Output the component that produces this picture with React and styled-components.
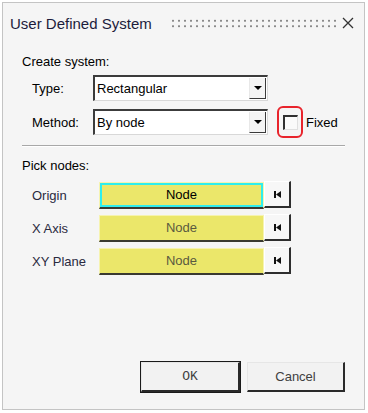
import styled, { createGlobalStyle } from "styled-components"

const GlobalStyle = createGlobalStyle`
  html, body { margin: 0; padding: 0; background: #ffffff; }
  body { padding: 2px; font-family: "Liberation Sans", Arial, sans-serif; }
`

const Window = styled.div`
  width: 361px;
  height: 406px;
  border: 1px solid #c4c4c4;
  background: #f5f5f5;
  display: flex;
  flex-direction: column;
  box-sizing: content-box;
`

const TitleBar = styled.div`
  height: 40px;
  display: flex;
  align-items: center;
  padding: 0 10px 0 7px;
`

const Title = styled.div`
  font-size: 15px;
  color: #1c1c3c;
`

const Dots = styled.div`
  flex: 1;
  height: 11px;
  margin: 0 6px 0 18px;
  background-image: radial-gradient(circle, #8a8a8a 0.9px, transparent 1.3px);
  background-size: 6px 5.5px;
`

const Body = styled.div`
  flex: 1;
  display: flex;
  flex-direction: column;
  padding: 11px 19px 17px 19px;
  font-size: 13px;
  color: #000;
`

const SectionLabel = styled.div`
  height: 16px;
  line-height: 16px;
`

const Rows = styled.div`
  display: flex;
  flex-direction: column;
  gap: ${p => p.gap}px;
  margin-top: ${p => p.top}px;
  padding-left: 10px;
`

const Row = styled.div`
  display: flex;
  align-items: center;
  height: 26px;
`

const Label = styled.div`
  width: ${p => p.w}px;
  color: ${p => p.color || "#000"};
`

const Combo = styled.div`
  width: 175px;
  height: 26px;
  box-sizing: border-box;
  border-top: 2px solid #3c3c3c;
  border-left: 2px solid #3c3c3c;
  border-right: 1px solid #d8d8d8;
  border-bottom: 1px solid #d8d8d8;
  background: #ffffff;
  display: flex;
  align-items: stretch;
`

const ComboText = styled.div`
  flex: 1;
  display: flex;
  align-items: center;
  padding-left: 2px;
`

const ComboArrow = styled.div`
  width: 15px;
  margin: 1px 1px 1px 0;
  background: #f4f4f4;
  border-left: 1px solid #e8e8e8;
  border-right: 1px solid #3a3a3a;
  border-bottom: 1px solid #3a3a3a;
  display: flex;
  align-items: center;
  justify-content: center;
  &::after {
    content: "";
    border-left: 4px solid transparent;
    border-right: 4px solid transparent;
    border-top: 4px solid #000;
  }
`

const Highlight = styled.div`
  margin-left: 9px;
  width: 26px;
  height: 32px;
  box-sizing: border-box;
  border: 2px solid #e8242c;
  border-radius: 6px;
  display: flex;
  align-items: center;
  justify-content: center;
`

const CheckBox = styled.div`
  width: 15px;
  height: 15px;
  box-sizing: border-box;
  border-top: 2px solid #303030;
  border-left: 2px solid #303030;
  border-right: 1px solid #e0e0e0;
  border-bottom: 1px solid #e0e0e0;
  background: #fafafa;
`

const CheckLabel = styled.div`
  margin-left: 3px;
`

const Separator = styled.div`
  margin: 10px 0 11px 0;
  height: 1px;
  background: #a8a8a8;
  border-bottom: 1px solid #ffffff;
`

const NodeButton = styled.div`
  width: 165px;
  height: 27px;
  box-sizing: border-box;
  background: #ebe76a;
  border: 1px solid #f6f3b0;
  border-bottom: 2px solid #3a3a30;
  display: flex;
  align-items: center;
  justify-content: center;
  color: ${p => (p.active ? "#000" : "#5a5a40")};
  box-shadow: ${p => (p.active ? "inset 0 0 0 2px #2eeeee" : "none")};
`

const PickButton = styled.div`
  width: 27px;
  height: 27px;
  box-sizing: border-box;
  margin-top: -1px;
  background: #f7f7f7;
  border-top: 1px solid #ffffff;
  border-left: 1px solid #ffffff;
  border-right: 2px solid #2e2e2e;
  border-bottom: 2px solid #2e2e2e;
  display: flex;
  align-items: center;
  justify-content: center;
`

const Spacer = styled.div`
  flex: 1;
`

const Buttons = styled.div`
  display: flex;
  justify-content: flex-end;
  gap: 7px;
`

const DlgButton = styled.div`
  width: ${p => p.w}px;
  height: 30px;
  box-sizing: border-box;
  background: #f2f2f2;
  border-top: 1px solid #e6e6e6;
  border-left: 1px solid #e6e6e6;
  border-right: 2px solid #2a2a2a;
  border-bottom: 2px solid #2a2a2a;
  outline: ${p => (p.def ? "1px solid #1a1a1a" : "none")};
  display: flex;
  align-items: center;
  justify-content: center;
  color: #404040;
  font-family: ${p => (p.mono ? '"Liberation Mono", monospace' : '"Liberation Sans", Arial, sans-serif')};
`

const PickIcon = () => (
  <svg width="9" height="9" viewBox="0 0 9 9">
    <rect x="1" y="1" width="2" height="7" fill="#111" />
    <polygon points="8,1 3,4.5 8,8" fill="#111" />
  </svg>
)

const CloseIcon = () => (
  <svg width="12" height="12" viewBox="0 0 12 12">
    <path d="M1 1 L11 11 M11 1 L1 11" stroke="#333" strokeWidth="1.3" />
  </svg>
)

const nodes = [
  { name: "Origin", active: true },
  { name: "X Axis" },
  { name: "XY Plane" },
]

const App = () => {
  return (
    <>
      <GlobalStyle />
      <Window>
        <TitleBar>
          <Title>User Defined System</Title>
          <Dots />
          <CloseIcon />
        </TitleBar>
        <Body>
          <SectionLabel>Create system:</SectionLabel>
          <Rows gap={8} top={5}>
            <Row>
              <Label w={61}>Type:</Label>
              <Combo>
                <ComboText>Rectangular</ComboText>
                <ComboArrow />
              </Combo>
            </Row>
            <Row>
              <Label w={61}>Method:</Label>
              <Combo>
                <ComboText>By node</ComboText>
                <ComboArrow />
              </Combo>
              <Highlight>
                <CheckBox />
              </Highlight>
              <CheckLabel>Fixed</CheckLabel>
            </Row>
          </Rows>
          <Separator />
          <SectionLabel>Pick nodes:</SectionLabel>
          <Rows gap={7} top={8}>
            {nodes.map(n => (
              <Row key={n.name}>
                <Label w={67} color="#2a2a40">{n.name}</Label>
                <NodeButton active={n.active}>Node</NodeButton>
                <PickButton>
                  <PickIcon />
                </PickButton>
              </Row>
            ))}
          </Rows>
          <Spacer />
          <Buttons>
            <DlgButton w={99} def mono>OK</DlgButton>
            <DlgButton w={98}>Cancel</DlgButton>
          </Buttons>
        </Body>
      </Window>
    </>
  )
}

export default App
